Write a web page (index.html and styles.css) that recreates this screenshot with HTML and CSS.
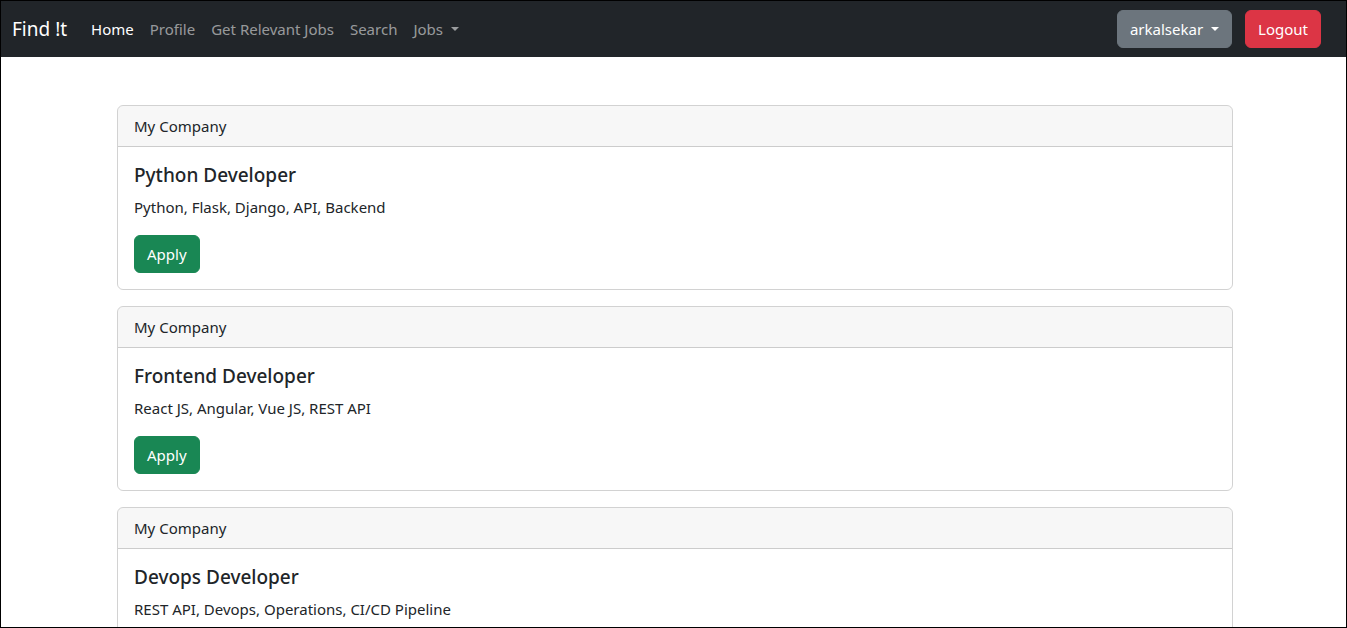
FILE: index.html
```html
<!DOCTYPE html>
<html lang="en">
<head>
    <meta charset="UTF-8">
    <meta name="viewport" content="width=device-width, initial-scale=1.0">
    <title>Find !t</title>
    <link rel="stylesheet" href="styles.css">
</head>
<body>
    <div class="frame">
        <nav class="navbar">
            <a class="brand" href="#">Find !t</a>
            <ul class="nav-links">
                <li><a class="active" href="#">Home</a></li>
                <li><a href="#">Profile</a></li>
                <li><a href="#">Get Relevant Jobs</a></li>
                <li><a href="#">Search</a></li>
                <li><a class="dropdown-toggle" href="#">Jobs</a></li>
            </ul>
            <div class="nav-right">
                <button class="btn btn-secondary dropdown-toggle">arkalsekar</button>
                <button class="btn btn-danger">Logout</button>
            </div>
        </nav>

        <div class="container">
            <div class="card">
                <div class="card-header">My Company</div>
                <div class="card-body">
                    <h5 class="card-title">Python Developer</h5>
                    <p class="card-text">Python, Flask, Django, API, Backend</p>
                    <button class="btn btn-success">Apply</button>
                </div>
            </div>

            <div class="card">
                <div class="card-header">My Company</div>
                <div class="card-body">
                    <h5 class="card-title">Frontend Developer</h5>
                    <p class="card-text">React JS, Angular, Vue JS, REST API</p>
                    <button class="btn btn-success">Apply</button>
                </div>
            </div>

            <div class="card">
                <div class="card-header">My Company</div>
                <div class="card-body">
                    <h5 class="card-title">Devops Developer</h5>
                    <p class="card-text">REST API, Devops, Operations, CI/CD Pipeline</p>
                    <button class="btn btn-success">Apply</button>
                </div>
            </div>
        </div>
    </div>
</body>
</html>
```

FILE: styles.css
```css
* {
    box-sizing: border-box;
}
html, body {
    margin: 0;
    height: 100%;
    overflow: hidden;
}
body {
    font-family: "Segoe UI", "Noto Sans", sans-serif;
    font-size: 15px;
    line-height: 24px;
    color: #212529;
    background-color: #fff;
}
.frame {
    height: 100%;
    border: 1px solid #000;
    overflow: hidden;
}
.navbar {
    display: flex;
    align-items: center;
    height: 56px;
    padding: 8px 25px 8px 11px;
    background-color: #212529;
}
.brand {
    font-size: 19px;
    line-height: 30px;
    padding: 5px 0;
    margin-right: 16px;
    color: #fff;
    text-decoration: none;
}
.nav-links {
    display: flex;
    list-style: none;
    margin: 0;
    padding: 0;
}
.nav-links a {
    display: block;
    padding: 8px;
    color: rgba(255, 255, 255, 0.55);
    text-decoration: none;
}
.nav-links a.active {
    color: #fff;
}
.dropdown-toggle::after {
    content: "";
    display: inline-block;
    margin-left: 8px;
    vertical-align: 4px;
    border-top: 4.5px solid;
    border-right: 4.5px solid transparent;
    border-left: 4.5px solid transparent;
}
.nav-right {
    display: flex;
    gap: 13px;
    margin-left: auto;
}
.btn {
    font-family: inherit;
    font-size: 15px;
    line-height: 24px;
    padding: 6px 12px;
    border: 1px solid transparent;
    border-radius: 6px;
    color: #fff;
    cursor: pointer;
}
.btn-secondary {
    background-color: #6c757d;
    border-color: #6c757d;
}
.btn-danger {
    background-color: #dc3545;
    border-color: #dc3545;
}
.btn-success {
    background-color: #198754;
    border-color: #198754;
}
.container {
    width: 1116px;
    margin: 48px 0 0 116px;
}
.card {
    border: 1px solid rgba(0, 0, 0, 0.175);
    border-radius: 6px;
    margin-bottom: 16px;
}
.card-header {
    padding: 8px 16px;
    background-color: rgba(0, 0, 0, 0.03);
    border-bottom: 1px solid rgba(0, 0, 0, 0.175);
    border-radius: 5px 5px 0 0;
}
.card-body {
    padding: 16px;
}
.card-title {
    margin: 0 0 8px;
    font-size: 19px;
    font-weight: 500;
    line-height: 24px;
}
.card-text {
    margin: 0 0 16px;
}
```
